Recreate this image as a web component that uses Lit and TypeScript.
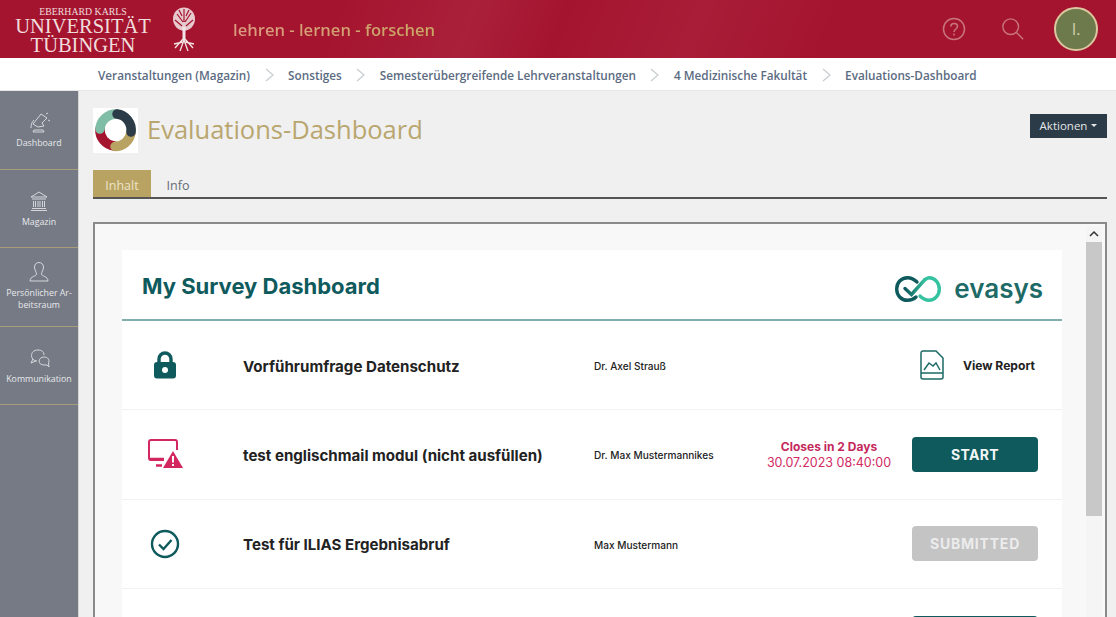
import { LitElement, html, css, svg } from 'lit';
import { customElement } from 'lit/decorators.js';

const navIcons = {
  dashboard: svg`<path d="M-6 2 L2 -8 L8 -4 L3 1 L5 4 L-1 5 Z M-8 6 C-8 2 -7 0 -5 -2 M7 -8 L9 -9 M9 -2 L11 -1 M-5 8 H4 L5 10 H-6 Z" />`,
  bank: svg`<path d="M-8 -4 L0 -9 L8 -4 Z M-7 -2 H7 M-5.500 0 V6 M-3.500 0 V6 M-1 0 V6 M1 0 V6 M3.500 0 V6 M5.500 0 V6 M-7 7.500 H7 M-8 9.500 H8" />`,
  user: svg`<path d="M-4.500 -5 C-4.500 -11 4.500 -11 4.500 -5 C4.500 -2 2.500 0 2.500 2 C2.500 4.500 9 4 9 9 H-9 C-9 4 -2.500 4.500 -2.500 2 C-2.500 0 -4.500 -2 -4.500 -5 Z" />`,
  chat: svg`<path d="M-2 3 C-9 3 -10 -8 -1 -8 C3 -8 5 -6 5 -3 M-6 1 L-8 5 L-3 3 M5 -1 C-1 -1 -2 7 5 7 C6 7 7 7 8 7 L10 9 L9.500 5 C11 2 9 -1 5 -1 Z" />`,
};

@customElement('app-root')
export class AppRoot extends LitElement {
  static styles = css`
    :host {
      display: flex;
      flex-direction: column;
      width: 1116px;
      height: 617px;
      overflow: hidden;
      font-family: 'Open Sans', sans-serif;
      background: #f0f0f0;
    }
    .header {
      flex: none;
      height: 58px;
      display: flex;
      align-items: center;
      background:
        linear-gradient(112deg, transparent 30%, rgba(255, 255, 255, 0.05) 42%, transparent 50%, rgba(255, 255, 255, 0.04) 62%, transparent 74%),
        #a5142f;
      color: #fff;
    }
    .uni {
      width: 166px;
      padding-top: 3px;
      text-align: center;
      font-family: 'Liberation Serif', serif;
      color: #f0dcdc;
      line-height: 19px;
      font-size: 20.500px;
      flex: none;
    }
    .uni small {
      display: block;
      font-size: 9.800px;
      line-height: 11px;
    }
    .tree {
      flex: none;
      margin-left: 5px;
    }
    .claim {
      margin-left: 36px;
      font-size: 16.600px;
      font-weight: 600;
      background: linear-gradient(90deg, #dc9a80, #c9a763);
      -webkit-background-clip: text;
      background-clip: text;
      color: transparent;
    }
    .tools {
      margin-left: auto;
      display: flex;
      align-items: center;
      padding-right: 18px;
    }
    .search {
      margin-left: 35px;
    }
    .avatar {
      width: 44px;
      height: 44px;
      margin-left: 29px;
      box-sizing: border-box;
      border: 2px solid #dcc8a0;
      border-radius: 50%;
      background: #6c7a4c;
      color: #d9cfae;
      display: flex;
      align-items: center;
      justify-content: center;
      font-size: 16px;
    }
    .crumbs {
      flex: none;
      height: 33px;
      background: #fff;
      border-bottom: 1px solid #e6e6e6;
      box-sizing: border-box;
      padding: 1px 0 0 98px;
      display: flex;
      align-items: center;
      font-size: 11.750px;
      font-weight: 600;
      color: #5b6b82;
    }
    .crumbs svg {
      margin: 0 14.500px;
    }
    .body {
      flex: 1;
      min-height: 0;
      display: flex;
    }
    .side {
      flex: none;
      width: 78px;
      background: #757a85;
      border-right: 1px solid #d5d5d5;
    }
    .nav {
      height: 78.500px;
      box-sizing: border-box;
      border-bottom: 1px solid #a89c76;
      display: flex;
      flex-direction: column;
      align-items: center;
      color: #e8e9eb;
      font-size: 8.800px;
      line-height: 12px;
      text-align: center;
      padding-top: 18px;
    }
    .nav svg {
      flex: none;
      margin-bottom: 2px;
    }
    .nav.tight {
      padding-top: 11px;
    }
    .main {
      flex: 1;
      min-width: 0;
      padding: 17px 9px 0 14px;
      display: flex;
      flex-direction: column;
    }
    .head {
      flex: none;
      display: flex;
      align-items: flex-start;
      height: 62px;
    }
    .mark {
      width: 45px;
      height: 45px;
      background: #fff;
      flex: none;
    }
    .head h1 {
      margin: 1px 0 0 9px;
      font-size: 25.500px;
      line-height: 40px;
      font-weight: 400;
      color: #b9a66f;
    }
    .actions {
      margin: 6px 0 0 auto;
      width: 77px;
      height: 24px;
      padding-bottom: 1px;
      box-sizing: border-box;
      background: #2b3b47;
      color: #e4e6e8;
      font-size: 11.500px;
      display: flex;
      align-items: center;
      justify-content: center;
      gap: 4px;
    }
    .caret {
      width: 0;
      height: 0;
      border: 3px solid transparent;
      border-top: 3px solid #e4e6e8;
      border-bottom: 0;
    }
    .tabs {
      flex: none;
      height: 29px;
      box-sizing: border-box;
      display: flex;
      border-bottom: 2px solid #555;
      font-size: 12.500px;
    }
    .tab {
      width: 58px;
      text-align: center;
      line-height: 32px;
      color: #666c74;
    }
    .tab.active {
      background: #b9a362;
      color: #ece4c8;
    }
    .tab.plain {
      width: 54px;
    }
    .frame {
      flex: 1;
      min-height: 0;
      margin-top: 23px;
      border: 2px solid #8a8a8a;
      border-bottom: 0;
      background: #f8f8f8;
      display: flex;
      overflow: hidden;
    }
    .scroll {
      flex: 1;
      min-width: 0;
      padding: 26px 24px 0 27px;
    }
    .card {
      background: #fff;
      font-family: 'Inter', sans-serif;
    }
    .top {
      height: 71px;
      box-sizing: border-box;
      display: flex;
      align-items: center;
      justify-content: space-between;
      padding: 0 19px 0 20px;
      border-bottom: 2px solid #83aeae;
    }
    .top h2 {
      margin: 2px 0 0;
      font-size: 22px;
      font-weight: 700;
      color: #0e5a5c;
    }
    .evasys {
      display: flex;
      align-items: center;
      gap: 13px;
      font-size: 26px;
      font-weight: 600;
      color: #1d6a66;
      line-height: 30px;
      margin-top: 9px;
    }
    .row {
      height: 89.300px;
      box-sizing: border-box;
      border-bottom: 1px solid #f2f2f2;
      display: grid;
      grid-template-columns: 121px 351px 164px 154px 126px;
      align-items: center;
    }
    .row > .icon {
      width: 86px;
      display: flex;
      justify-content: center;
    }
    .row .title {
      padding-top: 2px;
      font-size: 15.100px;
      font-weight: 700;
      color: #222;
    }
    .row .who {
      padding-top: 2px;
      font-size: 10.100px;
      font-weight: 500;
      color: #222;
    }
    .closes {
      text-align: center;
      color: #d22a63;
      font-size: 12.500px;
      line-height: 16px;
      padding: 2px 12px 0 0;
    }
    .closes b {
      display: block;
      font-size: 12px;
      font-weight: 700;
      color: #c3285a;
    }
    .btn {
      grid-column: 5;
      height: 35px;
      border-radius: 4px;
      display: flex;
      align-items: center;
      justify-content: center;
      font-size: 14px;
      font-weight: 700;
      letter-spacing: 0.3px;
      color: #f2f6f6;
      background: #0e5a5c;
    }
    .btn.done {
      background: #c4c4c4;
      color: #ececec;
      letter-spacing: 0.8px;
    }
    .report {
      grid-column: 4 / span 2;
      display: flex;
      align-items: center;
      justify-content: flex-end;
      gap: 19px;
      padding-right: 3px;
      font-size: 12.100px;
      font-weight: 700;
      color: #222;
    }
    .bar {
      flex: none;
      width: 16px;
      margin: 2px 3px 0 0;
      background: #f5f5f5;
      display: flex;
      flex-direction: column;
      align-items: center;
    }
    .bar .up {
      flex: none;
      height: 16px;
      display: flex;
      align-items: center;
    }
    .bar .thumb {
      flex: none;
      width: 16px;
      height: 274px;
      background: #c8c8c8;
    }
  `;

  private chevron() {
    return html`<svg width="9" height="16" viewBox="0 0 9 16" fill="none" stroke="#c8ccd0" stroke-width="1.200"><path d="M1 2 L8 8 L1 14" /></svg>`;
  }

  private nav(icon: unknown, lines: string, tight = false) {
    return html`<div class="nav ${tight ? 'tight' : ''}">
      <svg width="26" height="26" viewBox="-13 -13 26 26" fill="none" stroke="#dfe1e4" stroke-width="0.900">${icon}</svg>
      <span>${lines}</span>
    </div>`;
  }

  render() {
    return html`
      <div class="header">
        <div class="uni"><small>EBERHARD KARLS</small>UNIVERSITÄT<br />TÜBINGEN</div>
        <svg class="tree" width="26" height="46" viewBox="0 0 26 46">
          <ellipse cx="13" cy="13" rx="11" ry="11.500" fill="#e6c9cd" />
          <path d="M6 8 L12 16 M20 7 L14 16 M4 14 L11 20 M22 14 L15 20 M13 3 V16 M8 4 L11 10 M18 4 L15 10" stroke="#a5142f" stroke-width="1.200" fill="none" />
          <path d="M11.500 21 H14.500 L14.500 35 H11.500 Z" fill="#f2e4e4" />
          <path d="M12 33 L4 42 M13 34 L9 45 M13 34 L17 45 M14 33 L22 42 M12 36 L3 38 M14 36 L23 38" stroke="#f2e4e4" stroke-width="1.300" fill="none" />
        </svg>
        <div class="claim">lehren - lernen - forschen</div>
        <div class="tools">
          <svg width="24" height="24" viewBox="0 0 24 24" fill="none" stroke="#c9757c" stroke-width="1.500">
            <circle cx="12" cy="12" r="10.500" />
            <path d="M8.800 9.500 C8.800 5.500 15.500 5.500 15.500 9.500 C15.500 12 12 12 12 15" />
            <path d="M12 16.500 V18.500" />
          </svg>
          <svg class="search" width="24" height="24" viewBox="0 0 26 26" fill="none" stroke="#c9757c" stroke-width="1.500">
            <circle cx="10.500" cy="10.500" r="8.500" />
            <path d="M16.500 16.500 L24 24" />
          </svg>
          <div class="avatar">I.</div>
        </div>
      </div>
      <div class="crumbs">
        <span>Veranstaltungen (Magazin)</span>${this.chevron()}
        <span>Sonstiges</span>${this.chevron()}
        <span>Semesterübergreifende Lehrveranstaltungen</span>${this.chevron()}
        <span>4 Medizinische Fakultät</span>${this.chevron()}
        <span>Evaluations-Dashboard</span>
      </div>
      <div class="body">
        <div class="side">
          ${this.nav(navIcons.dashboard, 'Dashboard')}
          ${this.nav(navIcons.bank, 'Magazin')}
          ${this.nav(navIcons.user, 'Persönlicher Ar-beitsraum', true)}
          ${this.nav(navIcons.chat, 'Kommunikation')}
        </div>
        <div class="main">
          <div class="head">
            <svg class="mark" viewBox="0 0 45 45" fill="none" stroke-width="9.500" stroke-linecap="round">
              <path d="M21 38 A16 16 0 0 1 7 21" stroke="#a5142f" />
              <path d="M7 21 A16 16 0 0 1 24 6" stroke="#80bda6" />
              <path d="M38 24 A16 16 0 0 1 22 38.500" stroke="#b9a362" />
              <path d="M24 6 A16 16 0 0 1 38 24" stroke="#2b3b47" />
            </svg>
            <h1>Evaluations-Dashboard</h1>
            <div class="actions">Aktionen <span class="caret"></span></div>
          </div>
          <div class="tabs">
            <div class="tab active">Inhalt</div>
            <div class="tab plain">Info</div>
          </div>
          <div class="frame">
            <div class="scroll">
              <div class="card">
                <div class="top">
                  <h2>My Survey Dashboard</h2>
                  <div class="evasys">
                    <svg width="46" height="26" viewBox="0 0 46 26" fill="none" stroke-width="3.400" stroke-linecap="round">
                      <defs>
                        <linearGradient id="ev" x1="0" x2="1" y1="0" y2="0">
                          <stop offset="0" stop-color="#0e5a5c" />
                          <stop offset="1" stop-color="#35c2a0" />
                        </linearGradient>
                      </defs>
                      <path d="M22 6 C19 3 16 1.700 12.500 1.700 C6 1.700 1.700 6.800 1.700 13 C1.700 19.200 6 24.300 12.500 24.300 C16 24.300 19 23 21 21" stroke="#0e5a5c" />
                      <path d="M30 3.500 C32 2.300 33 1.700 34 1.700 C40 1.700 44.300 6.800 44.300 13 C44.300 19.200 40 24.300 34 24.300 C30 24.300 27 22 25 20" stroke="#35c2a0" />
                      <path d="M10 12.500 L16.500 18.500 L30 3.500" stroke="url(#ev)" />
                    </svg>
                    <span>evasys</span>
                  </div>
                </div>
                <div class="row">
                  <div class="icon">
                    <svg width="24" height="28" viewBox="0 0 24 28">
                      <path d="M6 12 V8 A6 6 0 0 1 18 8 V12" fill="none" stroke="#0e5a5c" stroke-width="3.400" />
                      <rect x="1" y="11" width="22" height="16.500" rx="3" fill="#0e5a5c" />
                      <circle cx="12" cy="19" r="3" fill="#fff" />
                    </svg>
                  </div>
                  <div class="title">Vorführumfrage Datenschutz</div>
                  <div class="who">Dr. Axel Strauß</div>
                  <div class="report">
                    <svg width="24" height="30" viewBox="0 0 24 30" fill="none" stroke="#1d6a66" stroke-width="1.500">
                      <path d="M2.500 1 H16 L23 8 V27 A2 2 0 0 1 21 29 H3 A2 2 0 0 1 1 27 V3 A2 2 0 0 1 2.500 1 Z" />
                      <path d="M1 23 H23 M4 20 L9 13 L13 16 L16 13 L20 20" />
                    </svg>
                    <span>View Report</span>
                  </div>
                </div>
                <div class="row">
                  <div class="icon">
                    <svg width="35" height="30" viewBox="0 0 35 30">
                      <path d="M16 21 H3 A2 2 0 0 1 1 19 V3 A2 2 0 0 1 3 1 H27 A2 2 0 0 1 29 3 V11" fill="none" stroke="#d2285f" stroke-width="2" />
                      <path d="M1 20 H16 M8 26.500 H14" stroke="#d2285f" stroke-width="2.500" />
                      <path d="M25 12 L35 29 H15 Z" fill="#d2285f" />
                      <path d="M25 17 V23.500 M25 25 V27" stroke="#fff" stroke-width="2" />
                    </svg>
                  </div>
                  <div class="title">test englischmail modul (nicht ausfüllen)</div>
                  <div class="who">Dr. Max Mustermannikes</div>
                  <div class="closes"><b>Closes in 2 Days</b>30.07.2023 08:40:00</div>
                  <div class="btn">START</div>
                </div>
                <div class="row">
                  <div class="icon">
                    <svg width="30" height="30" viewBox="0 0 30 30" fill="none" stroke="#0e5a5c">
                      <circle cx="15" cy="15" r="13" stroke-width="2.400" />
                      <path d="M9 15.500 L13.500 20 L21.500 11" stroke-width="2.400" />
                    </svg>
                  </div>
                  <div class="title">Test für ILIAS Ergebnisabruf</div>
                  <div class="who">Max Mustermann</div>
                  <div></div>
                  <div class="btn done">SUBMITTED</div>
                </div>
                <div class="row">
                  <div class="btn"></div>
                </div>
              </div>
            </div>
            <div class="bar">
              <div class="up">
                <svg width="10" height="8" viewBox="0 0 10 8" fill="none" stroke="#333" stroke-width="1.500"><path d="M1 6 L5 2 L9 6" /></svg>
              </div>
              <div class="thumb"></div>
            </div>
          </div>
        </div>
      </div>
    `;
  }
}
